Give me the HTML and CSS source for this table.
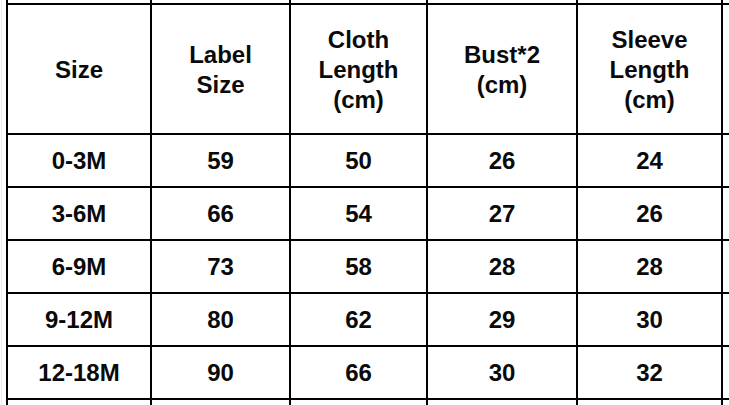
FILE: index.html
```html
<!DOCTYPE html>
<html lang="en">
<head>
<meta charset="utf-8">
<title>Size Chart</title>
<link rel="stylesheet" href="styles.css">
</head>
<body>
<div class="sheet">
  <table class="chart">
    <colgroup>
      <col class="c-size">
      <col class="c-label">
      <col class="c-cloth">
      <col class="c-bust">
      <col class="c-sleeve">
      <col class="c-extra">
    </colgroup>
    <tbody>
      <tr class="cut-top"><td></td><td></td><td></td><td></td><td></td><td></td></tr>
      <tr class="head">
        <th>Size</th>
        <th>Label<br>Size</th>
        <th>Cloth<br>Length<br>(cm)</th>
        <th>Bust*2<br>(cm)</th>
        <th>Sleeve<br>Length<br>(cm)</th>
        <th></th>
      </tr>
      <tr class="row"><td>0-3M</td><td>59</td><td>50</td><td>26</td><td>24</td><td></td></tr>
      <tr class="row"><td>3-6M</td><td>66</td><td>54</td><td>27</td><td>26</td><td></td></tr>
      <tr class="row"><td>6-9M</td><td>73</td><td>58</td><td>28</td><td>28</td><td></td></tr>
      <tr class="row"><td>9-12M</td><td>80</td><td>62</td><td>29</td><td>30</td><td></td></tr>
      <tr class="row"><td>12-18M</td><td>90</td><td>66</td><td>30</td><td>32</td><td></td></tr>
      <tr class="row"><td></td><td></td><td></td><td></td><td></td><td></td></tr>
    </tbody>
  </table>
</div>
</body>
</html>
```

FILE: styles.css
```css
html, body {
  margin: 0;
  padding: 0;
  background: #ffffff;
}

body {
  width: 729px;
  height: 405px;
  overflow: hidden;
}

.sheet {
  width: 729px;
  height: 405px;
  overflow: hidden;
  box-sizing: border-box;
  padding-left: 6px;
  background: linear-gradient(to right, #ffffff 1px, #ececec 1px, #ececec 2px, #ffffff 2px);
}

.chart {
  table-layout: fixed;
  border-collapse: separate;
  border-spacing: 0;
  width: 737px;
  border-left: 2px solid #000;
  font-family: "Liberation Sans", Arial, sans-serif;
  font-weight: bold;
  font-size: 24px;
  color: #0a0a0a;
  background: #fff;
}

.c-size { width: 144px; }
.c-label { width: 139px; }
.c-cloth { width: 137px; }
.c-bust { width: 150px; }
.c-sleeve { width: 145px; }
.c-extra { width: 20px; }

.chart td,
.chart th {
  box-sizing: border-box;
  padding: 0;
  border-right: 2px solid #000;
  border-bottom: 2px solid #000;
  text-align: center;
  vertical-align: middle;
  font-weight: bold;
}

.cut-top td {
  height: 5px;
  line-height: 0;
  font-size: 0;
}

.head th {
  height: 130px;
  padding-top: 2px;
  line-height: 30px;
}

.row td {
  height: 53px;
  line-height: 28px;
}
```
